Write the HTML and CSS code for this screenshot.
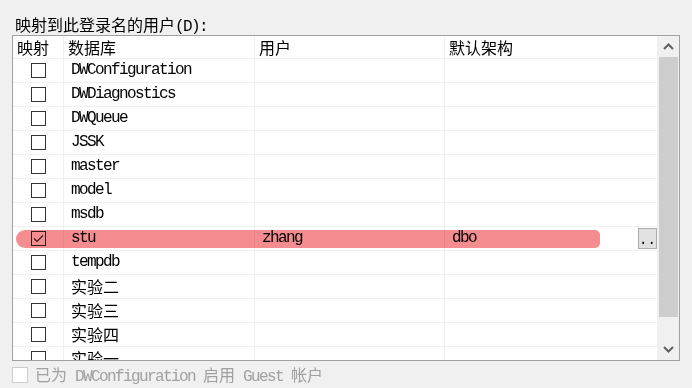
FILE: index.html
```html
<!DOCTYPE html>
<html lang="zh-CN">
<head>
  <meta charset="UTF-8"/>
  <title>用户映射</title>
  <link rel="stylesheet" href="styles.css">
</head>
<body>
  <div class="page">
    <div class="caption">映射到此登录名的用户<span class="en">(D):</span></div>

    <div class="list">
      <div class="grid">
        <div class="row head">
          <div class="cell">映射</div>
          <div class="cell">数据库</div>
          <div class="cell">用户</div>
          <div class="cell">默认架构</div>
        </div>
        <div class="row"><div class="cell chk"><span class="box"></span></div><div class="cell en">DWConfiguration</div><div class="cell"></div><div class="cell"></div></div>
        <div class="row"><div class="cell chk"><span class="box"></span></div><div class="cell en">DWDiagnostics</div><div class="cell"></div><div class="cell"></div></div>
        <div class="row"><div class="cell chk"><span class="box"></span></div><div class="cell en">DWQueue</div><div class="cell"></div><div class="cell"></div></div>
        <div class="row"><div class="cell chk"><span class="box"></span></div><div class="cell en">JSSK</div><div class="cell"></div><div class="cell"></div></div>
        <div class="row"><div class="cell chk"><span class="box"></span></div><div class="cell en">master</div><div class="cell"></div><div class="cell"></div></div>
        <div class="row"><div class="cell chk"><span class="box"></span></div><div class="cell en">model</div><div class="cell"></div><div class="cell"></div></div>
        <div class="row"><div class="cell chk"><span class="box"></span></div><div class="cell en">msdb</div><div class="cell"></div><div class="cell"></div></div>
        <div class="row">
          <div class="cell chk"><span class="box checked"><svg width="13" height="13" viewBox="0 0 13 13"><polyline points="2,6.5 5,9.5 11,3.5" fill="none" stroke="#333" stroke-width="1.2"/></svg></span></div>
          <div class="cell en">stu</div>
          <div class="cell en">zhang</div>
          <div class="cell en schema">dbo<span class="more">..</span></div>
        </div>
        <div class="row"><div class="cell chk"><span class="box"></span></div><div class="cell en">tempdb</div><div class="cell"></div><div class="cell"></div></div>
        <div class="row"><div class="cell chk"><span class="box"></span></div><div class="cell">实验二</div><div class="cell"></div><div class="cell"></div></div>
        <div class="row"><div class="cell chk"><span class="box"></span></div><div class="cell">实验三</div><div class="cell"></div><div class="cell"></div></div>
        <div class="row"><div class="cell chk"><span class="box"></span></div><div class="cell">实验四</div><div class="cell"></div><div class="cell"></div></div>
        <div class="row"><div class="cell chk"><span class="box"></span></div><div class="cell">实验一</div><div class="cell"></div><div class="cell"></div></div>
      </div>

      <div class="scrollbar">
        <div class="arrow">
          <svg width="11" height="7" viewBox="0 0 11 7"><polyline points="1,6 5.5,1.5 10,6" fill="none" stroke="#606060" stroke-width="2"/></svg>
        </div>
        <div class="thumb"></div>
        <div class="track"></div>
        <div class="arrow">
          <svg width="11" height="7" viewBox="0 0 11 7"><polyline points="1,1 5.5,5.5 10,1" fill="none" stroke="#606060" stroke-width="2"/></svg>
        </div>
      </div>

      <!-- red marker stroke over the stu row -->
      <div class="marker"></div>
    </div>

    <div class="guest">
      <span class="box off"></span>
      <span>已为<span class="en"> DWConfiguration </span>启用<span class="en"> Guest </span>帐户</span>
    </div>
  </div>
</body>
</html>
```

FILE: styles.css
```css
body {
  margin: 0; background: #f0f0f0; color: #000;
  font-family: "Noto Sans CJK SC", sans-serif; font-size: 16px;
}
.page { padding: 0 12px; width: 668px; }
.en { font-family: "Liberation Mono", monospace; letter-spacing: -1.6px; }

.caption {
  height: 35px; box-sizing: border-box;
  padding: 14px 0 0 3px; line-height: 20px;
}

.list {
  position: relative; display: flex;
  height: 326px; box-sizing: border-box;
  border: 1px solid #a0a0a0; background: #fff; overflow: hidden;
}
.grid { width: 645px; flex-shrink: 0; }
.row {
  display: grid; grid-template-columns: 51px 191px 190px 213px;
  height: 24px;
}
.row.head { height: 23px; }
.cell {
  border-right: 1px solid #f0f0f0; border-bottom: 1px solid #f0f0f0;
  padding-left: 7px; line-height: 23px;
  white-space: nowrap; overflow: hidden;
}
.head .cell { padding-left: 4px; line-height: 22px; }
.cell.chk {
  padding: 0; display: flex; align-items: center; justify-content: center;
}
.cell.schema { display: flex; align-items: flex-start; padding-right: 0; }

.box {
  display: block; width: 15px; height: 15px; box-sizing: border-box;
  border: 1px solid #333; background: #fff;
}
.box svg { display: block; }
.box.off { width: 16px; height: 16px; border-color: #cccccc; flex-shrink: 0; }

.more {
  margin-left: auto; margin-top: 1px;
  width: 19px; height: 21px; box-sizing: border-box;
  border: 1px solid #adadad; background: #e1e1e1;
  font-size: 14px; line-height: 22px; letter-spacing: 0; text-align: center;
}

.scrollbar {
  width: 21px; background: #f0f0f0;
  display: flex; flex-direction: column;
}
.arrow { height: 21px; display: flex; align-items: center; justify-content: center; }
.thumb { height: 260px; margin: 0 1px; background: #cdcdcd; }
.track { flex: 1; }

.marker {
  position: absolute; left: 3px; top: 194px;
  width: 584px; height: 18px;
  border-radius: 9px 5px 5px 9px;
  background: #f58c90; mix-blend-mode: multiply;
}

.guest {
  display: flex; align-items: center; gap: 7px;
  height: 18px; margin-top: 5px;
  color: #a0a0a0; line-height: 18px;
}
```
